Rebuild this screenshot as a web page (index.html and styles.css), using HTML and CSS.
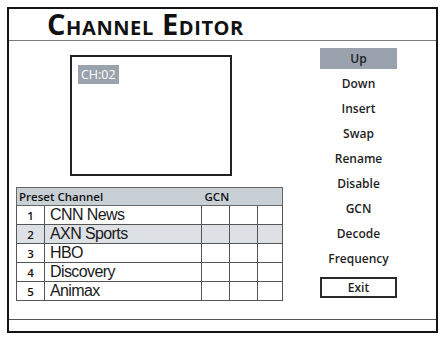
FILE: index.html
```html
<!DOCTYPE html>
<html>
<head>
<meta charset="utf-8">
<link rel="stylesheet" href="styles.css">
</head>
<body>
<div class="screen">
  <header class="titlebar"><h1 class="title">Channel Editor</h1></header>
  <main class="main">
    <section class="left">
      <div class="video"><span class="ch">CH:02</span></div>
      <table class="list">
        <colgroup>
          <col class="c-num"><col class="c-name"><col class="c-g"><col class="c-g"><col class="c-g3">
        </colgroup>
        <thead>
          <tr><th colspan="2" class="h-preset">Preset Channel</th><th colspan="3" class="h-gcn">GCN</th></tr>
        </thead>
        <tbody>
          <tr><td class="num">1</td><td class="name">CNN News</td><td></td><td></td><td></td></tr>
          <tr class="sel"><td class="num">2</td><td class="name">AXN Sports</td><td></td><td></td><td></td></tr>
          <tr><td class="num">3</td><td class="name">HBO</td><td></td><td></td><td></td></tr>
          <tr><td class="num">4</td><td class="name">Discovery</td><td></td><td></td><td></td></tr>
          <tr><td class="num">5</td><td class="name">Animax</td><td></td><td></td><td></td></tr>
        </tbody>
      </table>
    </section>
    <nav class="menu">
      <div class="item active">Up</div>
      <div class="item">Down</div>
      <div class="item">Insert</div>
      <div class="item">Swap</div>
      <div class="item">Rename</div>
      <div class="item">Disable</div>
      <div class="item">GCN</div>
      <div class="item">Decode</div>
      <div class="item">Frequency</div>
      <div class="item exit">Exit</div>
    </nav>
  </main>
  <footer class="status"></footer>
</div>
</body>
</html>
```
FILE: styles.css
```css
html, body {
  margin: 0;
  padding: 0;
  background: #fff;
}
body {
  padding: 7px;
}
.screen {
  box-sizing: border-box;
  width: 431px;
  height: 326px;
  border: 2px solid #141414;
  display: flex;
  flex-direction: column;
  font-family: "Open Sans", "Noto Sans", sans-serif;
  color: #111;
}
.titlebar {
  height: 31px;
  border-bottom: 1px solid #7a7a7a;
  display: flex;
  align-items: flex-end;
  padding-left: 38px;
}
.title {
  margin: 0;
  font-size: 29px;
  font-weight: 700;
  font-variant: small-caps;
  line-height: 1;
  letter-spacing: 0.6px;
  position: relative;
  top: -2px;
}
.main {
  height: 278px;
  border-bottom: 1px solid #555;
  display: flex;
}
.left {
  width: 280px;
  padding-left: 7px;
  padding-top: 14px;
  box-sizing: border-box;
}
.video {
  box-sizing: border-box;
  width: 162px;
  height: 121px;
  margin-left: 54px;
  border: 2px solid #222;
  padding: 5px 0 0 6px;
}
.ch {
  display: inline-block;
  background: #9aa2ad;
  color: #fff;
  font-size: 12.5px;
  line-height: 19px;
  padding: 0 3px 0 3px;
}
.list {
  margin-top: 11px;
  border-collapse: collapse;
  width: 266px;
  table-layout: fixed;
}
.c-num { width: 28px; }
.c-name { width: 157px; }
.c-g { width: 28px; }
.c-g3 { width: 25px; }
.list th {
  background: #c8cfd5;
  border-top: 1px solid #666;
  border-bottom: 1px solid #666;
  font-size: 11.5px;
  font-weight: 600;
  text-align: left;
  height: 17px;
  padding: 0;
  line-height: 17px;
}
.list th.h-preset { padding-left: 2px; border-left: 1px solid #666; }
.list th.h-gcn { padding-left: 3px; border-right: 1px solid #666; }
.list td {
  border: 1px solid #555;
  height: 17.8px;
  padding: 0;
}
.list .num {
  text-align: center;
  font-size: 11.5px;
  font-weight: 600;
}
.list .name {
  font-family: "Liberation Sans", Arial, sans-serif;
  font-size: 16px;
  letter-spacing: -0.6px;
  padding-left: 5px;
  line-height: 18px;
  color: #1a1a1a;
}
.list .sel td { background: #dde1e5; }
.menu {
  display: flex;
  flex-direction: column;
  align-items: center;
  gap: 4px;
  padding-top: 7px;
  margin-left: 31px;
  width: 77px;
}
.item {
  width: 77px;
  height: 21px;
  line-height: 21px;
  text-align: center;
  font-size: 12px;
  font-weight: 600;
  color: #1e1e1e;
}
.item.active { background: #9aa2ad; }
.item.exit {
  box-sizing: border-box;
  margin-top: 4px;
  border: 2px solid #2a2a2a;
  line-height: 17px;
}
.status { flex: 1; }
```
